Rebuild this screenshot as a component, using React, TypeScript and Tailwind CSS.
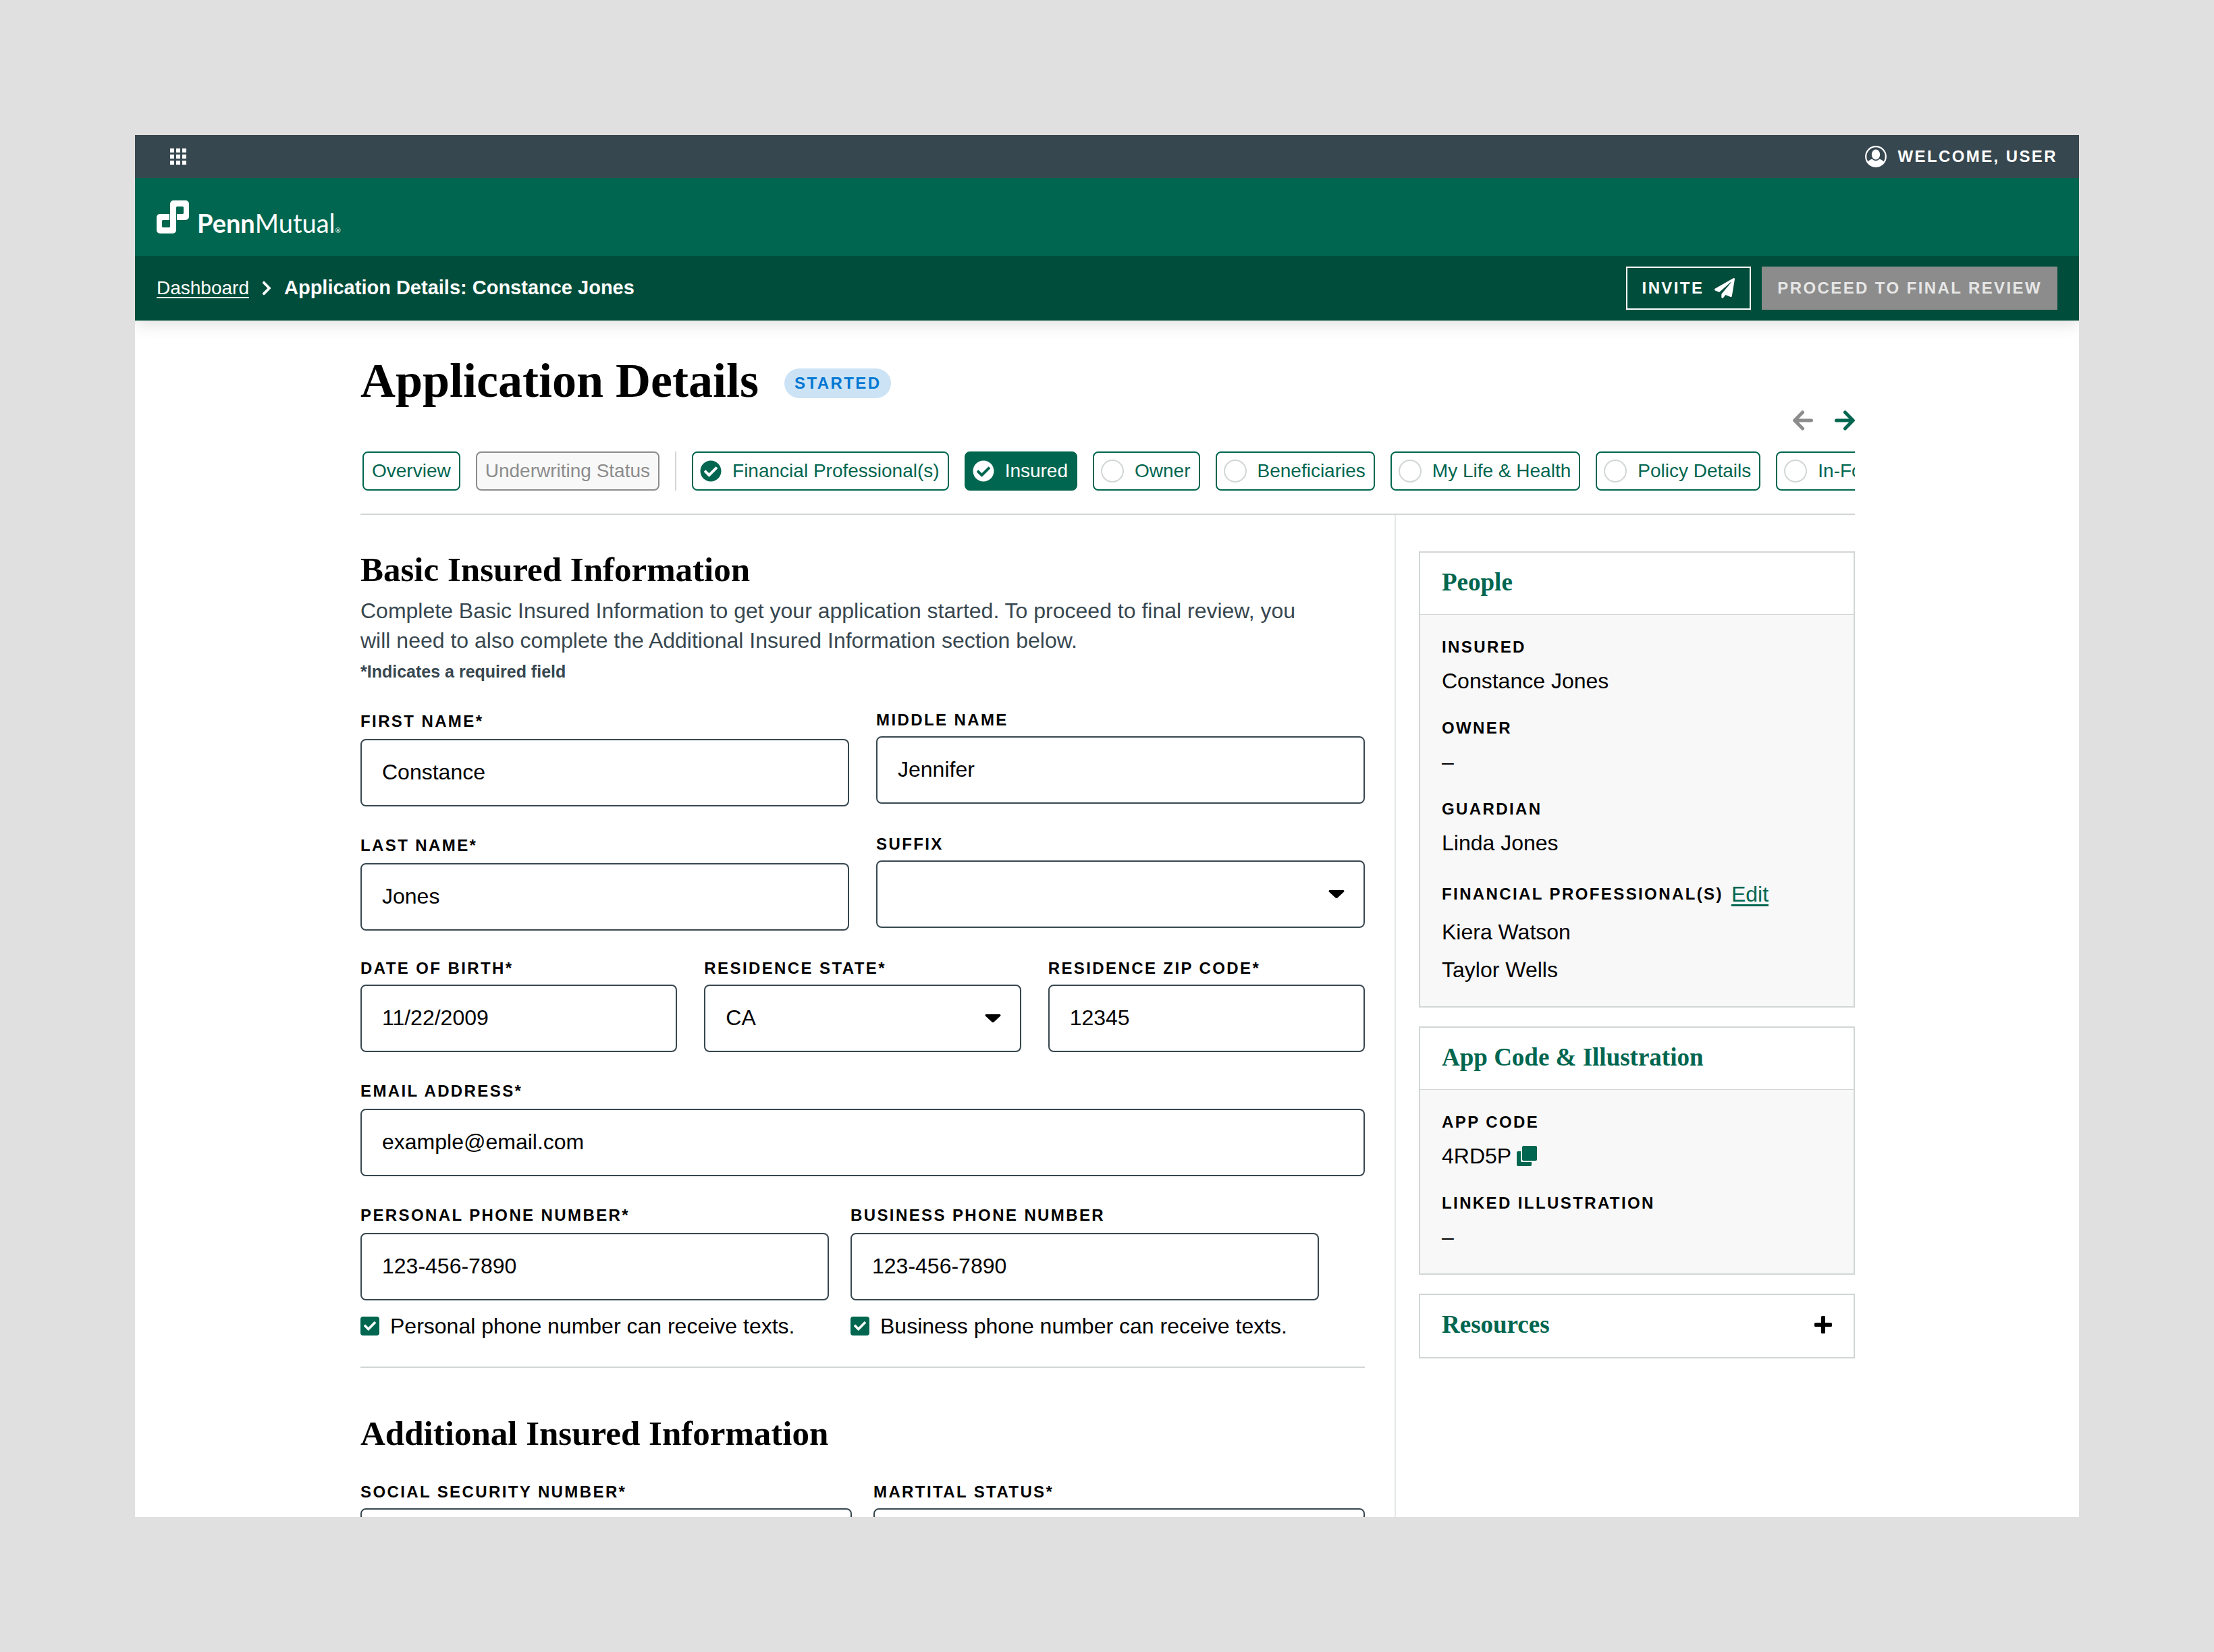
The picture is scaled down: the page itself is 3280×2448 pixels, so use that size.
import type { ReactNode } from "react";
import clsx from "clsx";
import { FaCheck, FaCheckCircle, FaChevronRight, FaPaperPlane } from "react-icons/fa";

const steps = [
  { label: "Financial Professional(s)", status: "done" },
  { label: "Insured", status: "active" },
  { label: "Owner", status: "todo" },
  { label: "Beneficiaries", status: "todo" },
  { label: "My Life & Health", status: "todo" },
  { label: "Policy Details", status: "todo" },
  { label: "In-Force", status: "todo" },
];

const GridIcon = () => (
  <svg viewBox="0 0 24 24" className="size-6 fill-white">
    {[0, 9, 18].map((y) =>
      [0, 9, 18].map((x) => <rect key={`${x}-${y}`} x={x} y={y} width="6" height="6" />)
    )}
  </svg>
);

const UserIcon = () => (
  <svg viewBox="0 0 32 32" className="size-8">
    <circle cx="16" cy="16" r="14.8" fill="none" stroke="white" strokeWidth="2.2" />
    <ellipse cx="16" cy="13" rx="6.2" ry="7.4" fill="white" />
    <path
      d="M3.6 24.6C5.4 21.6 8.2 20.2 10.6 19.8C13.6 22.9 18.4 22.9 21.4 19.8C23.8 20.2 26.6 21.6 28.4 24.6C25.6 28.8 21.2 31 16 31S6.4 28.8 3.6 24.6Z"
      fill="white"
    />
  </svg>
);

const CopyIcon = () => (
  <svg viewBox="0 0 30 30" className="size-[30px] fill-[#00664f]">
    <rect x="8" y="0" width="22" height="22" rx="2" />
    <path d="M2 8H6V22a2 2 0 0 0 2 2H22V28a2 2 0 0 1-2 2H2a2 2 0 0 1-2-2V10a2 2 0 0 1 2-2Z" />
  </svg>
);

const ArrowRightIcon = ({ className }: { className?: string }) => (
  <svg
    viewBox="0 0 30 30"
    className={clsx("size-[30px] fill-none stroke-current stroke-[5]", className)}
    strokeLinecap="round"
    strokeLinejoin="round"
  >
    <path d="M2.500 15H26M15.500 3L27.300 15L15.500 27" />
  </svg>
);

const PlusIcon = () => (
  <svg viewBox="0 0 26 26" className="size-[26px]">
    <rect x="0" y="10" width="26" height="6" rx="1.5" />
    <rect x="10" y="0" width="6" height="26" rx="1.5" />
  </svg>
);

const Logo = () => (
  <a href="#" className="flex items-end gap-3 font-['Lato',sans-serif] text-white">
    <svg viewBox="0 0 48 49" className="h-[49px] w-12">
      <path
        fillRule="evenodd"
        fill="white"
        d="M25 0H43a5 5 0 0 1 5 5V24a5 5 0 0 1-5 5H29V44a5 5 0 0 1-5 5H5a5 5 0 0 1-5-5V25a5 5 0 0 1 5-5H20V5a5 5 0 0 1 5-5ZM30.5 9A1.5 1.5 0 0 0 29 10.5V20H38.5A1.5 1.5 0 0 0 40 18.5V10.5A1.5 1.5 0 0 0 38.5 9ZM9.5 29A1.5 1.5 0 0 0 8 30.5V38.5A1.5 1.5 0 0 0 9.5 40H18.5A1.5 1.5 0 0 0 20 38.5V29Z"
      />
      <path d="M19.5 20V29M29.5 20V29" stroke="#00664f" strokeWidth="1" />
    </svg>
    <span className="flex items-baseline text-[38px] leading-[30px]">
      <span className="font-bold">Penn</span>
      <span>Mutual</span>
      <span className="text-[10px] leading-none">®</span>
    </span>
  </a>
);

const Field = ({
  id,
  label,
  tall,
  children,
}: {
  id: string;
  label: string;
  tall?: boolean;
  children: ReactNode;
}) => (
  <div className="min-w-0">
    <label
      htmlFor={id}
      className={clsx(
        "mb-2 block text-2xl font-bold tracking-widest uppercase",
        tall ? "leading-[36px]" : "leading-[32px]"
      )}
    >
      {label}
    </label>
    {children}
  </div>
);

const TextInput = ({ id, value, type = "text" }: { id: string; value?: string; type?: string }) => (
  <input
    id={id}
    type={type}
    defaultValue={value}
    className="block h-[100px] w-full rounded-lg border-2 border-[#37474f] bg-white px-[30px] pb-0.5 text-[32px]"
  />
);

const SelectInput = ({ id, options }: { id: string; options: string[] }) => (
  <div className="relative">
    <select
      id={id}
      className="block h-[100px] w-full appearance-none rounded-lg border-2 border-[#37474f] bg-white px-[30px] pb-0.5 text-[32px]"
    >
      {options.map((option) => (
        <option key={option}>{option}</option>
      ))}
    </select>
    <svg viewBox="0 0 24 12" className="pointer-events-none absolute inset-y-0 right-[30px] my-auto h-3 w-6">
      <path d="M2 0H22a1.500 1.500 0 0 1 1.100 2.500L13.400 11.400a2 2 0 0 1-2.800 0L0.900 2.500A1.500 1.500 0 0 1 2 0Z" />
    </svg>
  </div>
);

const Checkbox = ({ id, label }: { id: string; label: string }) => (
  <div className="mt-4 flex items-center gap-4">
    <span className="grid place-items-center">
      <input
        id={id}
        type="checkbox"
        defaultChecked
        className="peer col-start-1 row-start-1 size-7 appearance-none rounded-sm border-2 border-[#00664f] checked:bg-[#00664f]"
      />
      <FaCheck className="pointer-events-none col-start-1 row-start-1 hidden size-[18px] text-white peer-checked:block" />
    </span>
    <label htmlFor={id} className="text-[32px] leading-[44px] whitespace-nowrap">
      {label}
    </label>
  </div>
);

const CardTitle = ({ children }: { children: ReactNode }) => (
  <h3 className="font-['Liberation_Serif',serif] text-[37px] leading-[40px] font-bold text-[#00664f]">{children}</h3>
);

const Card = ({ title, children }: { title: string; children: ReactNode }) => (
  <section className="border-2 border-[#d2d6d6] bg-[#f8f8f8]">
    <div className="border-b border-[#d2d6d6] bg-white px-8 pt-6 pb-[27px]">
      <CardTitle>{title}</CardTitle>
    </div>
    <dl className="flex flex-col gap-8 p-8">{children}</dl>
  </section>
);

const CardItem = ({ label, children }: { label: string; children: ReactNode }) => (
  <div className="flex flex-col gap-3">
    <dt className="text-2xl leading-[32px] font-bold tracking-widest uppercase">{label}</dt>
    <dd className="flex items-center gap-2 text-[32px] leading-[44px]">{children}</dd>
  </div>
);

const Header = () => (
  <header className="relative z-10 text-white shadow-[0_4px_24px_rgba(0,0,0,0.14)]">
    <div className="flex h-16 items-center justify-between bg-[#37474f] pr-8 pl-[52px]">
      <button aria-label="Apps">
        <GridIcon />
      </button>
      <button className="flex items-center gap-4 text-2xl font-bold tracking-widest uppercase">
        <UserIcon />
        Welcome, User
      </button>
    </div>
    <div className="flex h-[115px] items-center bg-[#00664f] px-8">
      <Logo />
    </div>
    <div className="flex h-24 items-center justify-between bg-[#014d3b] px-8">
      <nav className="flex items-center gap-[14px] text-[28px]">
        <a href="#" className="underline underline-offset-4">
          Dashboard
        </a>
        <FaChevronRight className="size-6" />
        <span className="text-[29px] font-bold">Application Details: Constance Jones</span>
      </nav>
      <div className="flex gap-4 text-2xl font-bold tracking-widest">
        <button className="flex h-16 items-center gap-4 border-2 border-white px-[22px] uppercase">
          Invite
          <FaPaperPlane className="size-[30px]" />
        </button>
        <button disabled className="h-16 bg-[#8c8c8c] px-[23px] text-[#e6e6e6] uppercase">
          Proceed to Final Review
        </button>
      </div>
    </div>
  </header>
);

const Steps = () => (
  <nav className="mt-7 flex items-center gap-[23px] overflow-hidden pl-[3px] text-[28px] whitespace-nowrap text-[#00664f]">
    <button className="h-[58px] shrink-0 rounded-lg border-2 border-[#00664f] px-3">Overview</button>
    <button disabled className="h-[58px] shrink-0 rounded-lg border-2 border-[#8c8c8c] bg-[#f8f8f8] px-3 text-[#8c8c8c]">
      Underwriting Status
    </button>
    <span className="h-[58px] w-0.5 shrink-0 bg-[#d2d6d6]" />
    {steps.map((step) => (
      <button
        key={step.label}
        className={clsx(
          "flex h-[58px] shrink-0 items-center gap-4 rounded-lg border-2 border-[#00664f] pr-3 pl-[10px]",
          step.status === "active" && "bg-[#00664f] text-white"
        )}
      >
        {step.status === "todo" ? (
          <span className="size-[34px] rounded-full border-2 border-[#d2d6d6]" />
        ) : (
          <FaCheckCircle className="size-8" />
        )}
        {step.label}
      </button>
    ))}
  </nav>
);

const SectionTitle = ({ children }: { children: ReactNode }) => (
  <h2 className="font-['Liberation_Serif',serif] text-[51px] leading-[54px] font-bold">{children}</h2>
);

const InsuredForm = () => (
  <form>
    <SectionTitle>Basic Insured Information</SectionTitle>
    <p className="mt-3 max-w-[1410px] text-[32px] leading-[44px] text-[#37474f]">
      Complete Basic Insured Information to get your application started. To proceed to final review, you will need to
      also complete the Additional Insured Information section below.
    </p>
    <p className="mt-2 text-[25px] leading-[32px] font-bold text-[#37474f]">*Indicates a required field</p>

    <div className="mt-10 flex flex-col gap-10">
      <div className="grid grid-cols-2 gap-10">
        <Field id="first-name" label="First Name*" tall>
          <TextInput id="first-name" value="Constance" />
        </Field>
        <Field id="middle-name" label="Middle Name">
          <TextInput id="middle-name" value="Jennifer" />
        </Field>
        <Field id="last-name" label="Last Name*" tall>
          <TextInput id="last-name" value="Jones" />
        </Field>
        <Field id="suffix" label="Suffix">
          <SelectInput id="suffix" options={["", "Jr.", "Sr."]} />
        </Field>
      </div>
      <div className="grid grid-cols-3 gap-10">
        <Field id="dob" label="Date of Birth*">
          <TextInput id="dob" value="11/22/2009" />
        </Field>
        <Field id="state" label="Residence State*">
          <SelectInput id="state" options={["CA", "NY", "PA"]} />
        </Field>
        <Field id="zip" label="Residence Zip Code*">
          <TextInput id="zip" value="12345" />
        </Field>
      </div>
      <Field id="email" label="Email Address*" tall>
        <TextInput id="email" type="email" value="example@email.com" />
      </Field>
      <div className="grid grid-cols-2 gap-8 pr-[68px]">
        <div>
          <Field id="personal-phone" label="Personal Phone Number*" tall>
            <TextInput id="personal-phone" type="tel" value="123-456-7890" />
          </Field>
          <Checkbox id="personal-texts" label="Personal phone number can receive texts." />
        </div>
        <div>
          <Field id="business-phone" label="Business Phone Number" tall>
            <TextInput id="business-phone" type="tel" value="123-456-7890" />
          </Field>
          <Checkbox id="business-texts" label="Business phone number can receive texts." />
        </div>
      </div>
    </div>

    <hr className="mt-[38px] mb-[70px] border-t-2 border-[#d2d6d6]" />

    <SectionTitle>Additional Insured Information</SectionTitle>
    <div className="mt-11 grid grid-cols-2 gap-8">
      <Field id="ssn" label="Social Security Number*">
        <TextInput id="ssn" />
      </Field>
      <Field id="marital-status" label="Martital Status*">
        <TextInput id="marital-status" />
      </Field>
    </div>
  </form>
);

const Sidebar = () => (
  <aside className="flex w-[682px] shrink-0 flex-col gap-7 border-l-2 border-[#e3e7e7] pt-[54px] pl-[34px]">
    <Card title="People">
      <CardItem label="Insured">Constance Jones</CardItem>
      <CardItem label="Owner">–</CardItem>
      <CardItem label="Guardian">Linda Jones</CardItem>
      <div className="flex flex-col gap-3 text-[32px] leading-[44px]">
        <dt className="flex items-center gap-3">
          <span className="text-2xl font-bold tracking-widest uppercase">Financial Professional(s)</span>
          <a href="#" className="text-[#00664f] underline underline-offset-4">
            Edit
          </a>
        </dt>
        <dd>Kiera Watson</dd>
        <dd>Taylor Wells</dd>
      </div>
    </Card>
    <Card title="App Code & Illustration">
      <CardItem label="App Code">
        4RD5P
        <button type="button" aria-label="Copy app code">
          <CopyIcon />
        </button>
      </CardItem>
      <CardItem label="Linked Illustration">–</CardItem>
    </Card>
    <section className="flex items-center justify-between border-2 border-[#d2d6d6] bg-white px-8 pt-6 pb-7">
      <CardTitle>Resources</CardTitle>
      <button type="button" aria-label="Expand resources">
        <PlusIcon />
      </button>
    </section>
  </aside>
);

export default function App() {
  return (
    <div className="h-screen bg-[#e0e0e0] p-[200px] font-['Liberation_Sans',Arial,sans-serif] text-black">
      <div className="flex h-full flex-col overflow-hidden bg-white">
        <Header />
        <main className="flex min-h-0 flex-1 flex-col pt-12 pr-[332px] pl-[334px]">
          <div className="border-b-2 border-[#d2d6d6] pb-[34px]">
            <div className="flex items-center gap-[38px]">
              <h1 className="font-['Liberation_Serif',serif] text-7xl leading-[82px] font-bold">Application Details</h1>
              <span className="mt-2 rounded-full bg-[#cce3f6] px-[15px] text-2xl leading-[44px] font-bold tracking-widest text-[#0077d4] uppercase">
                Started
              </span>
            </div>
            <div className="flex h-9 items-center justify-end gap-8">
              <button disabled aria-label="Previous steps" className="text-[#8c8c8c]">
                <ArrowRightIcon className="rotate-180" />
              </button>
              <button aria-label="Next steps" className="text-[#00664f]">
                <ArrowRightIcon />
              </button>
            </div>
            <Steps />
          </div>
          <div className="flex flex-1">
            <div className="min-w-0 flex-1 pt-[54px] pr-11">
              <InsuredForm />
            </div>
            <Sidebar />
          </div>
        </main>
      </div>
    </div>
  );
}
